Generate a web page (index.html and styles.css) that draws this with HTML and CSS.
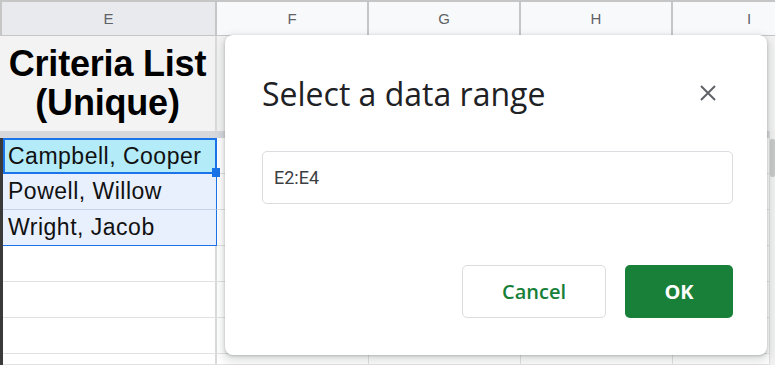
FILE: index.html
```html
<!DOCTYPE html>
<html>
<head>
<meta charset="utf-8">
<link rel="stylesheet" href="styles.css">
</head>
<body>
<div class="sheet">
  <div class="colheads">
    <div class="ch ch-e sel">E</div>
    <div class="ch">F</div>
    <div class="ch">G</div>
    <div class="ch">H</div>
    <div class="ch ch-last">I</div>
  </div>
  <div class="row row-head">
    <div class="cell cell-e head-cell">Criteria List<br>(Unique)</div>
    <div class="cell"></div><div class="cell"></div><div class="cell"></div><div class="cell cell-last"></div>
  </div>
  <div class="freeze"></div>
  <div class="body">
    <div class="row">
      <div class="cell cell-e data active">Campbell, Cooper</div>
      <div class="cell"></div><div class="cell"></div><div class="cell"></div><div class="cell cell-last"></div>
    </div>
    <div class="row">
      <div class="cell cell-e data range">Powell, Willow</div>
      <div class="cell"></div><div class="cell"></div><div class="cell"></div><div class="cell cell-last"></div>
    </div>
    <div class="row">
      <div class="cell cell-e data range last">Wright, Jacob</div>
      <div class="cell"></div><div class="cell"></div><div class="cell"></div><div class="cell cell-last"></div>
    </div>
    <div class="row"><div class="cell cell-e"></div><div class="cell"></div><div class="cell"></div><div class="cell"></div><div class="cell cell-last"></div></div>
    <div class="row"><div class="cell cell-e"></div><div class="cell"></div><div class="cell"></div><div class="cell"></div><div class="cell cell-last"></div></div>
    <div class="row"><div class="cell cell-e"></div><div class="cell"></div><div class="cell"></div><div class="cell"></div><div class="cell cell-last"></div></div>
    <div class="row row-cut"><div class="cell cell-e"></div><div class="cell"></div><div class="cell"></div><div class="cell"></div><div class="cell cell-last"></div></div>
  </div>
  <div class="handle"></div>
  <div class="scrollbar"><div class="thumb"></div></div>
</div>

<div class="dialog">
  <div class="dlg-head">
    <div class="dlg-title">Select a data range</div>
    <svg class="close" width="24" height="24" viewBox="0 0 24 24"><path d="M5 5L19 19M19 5L5 19" stroke="#5f6368" stroke-width="2" fill="none"/></svg>
  </div>
  <div class="range-input">E2:E4</div>
  <div class="actions">
    <div class="btn btn-cancel">Cancel</div>
    <div class="btn btn-ok">OK</div>
  </div>
</div>
</body>
</html>
```
FILE: styles.css
```css
* { box-sizing: border-box; }
html, body { margin: 0; padding: 0; }
body {
  width: 775px;
  height: 365px;
  overflow: hidden;
  background: #fff;
  font-family: Arial, "Liberation Sans", sans-serif;
  position: relative;
}
.sheet { width: 775px; height: 365px; overflow: hidden; position: relative; }
.colheads {
  display: flex;
  height: 36px;
  border-top: 2px solid #c6c6c6;
  border-bottom: 1px solid #c6c6c6;
  background: #f8f9fa;
}
.ch {
  width: 152px;
  flex: none;
  border-right: 2px solid #c6c6c6;
  display: flex;
  align-items: center;
  justify-content: center;
  font-family: "Liberation Sans", Arial, sans-serif;
  font-size: 15px;
  color: #5f6368;
}
.ch-e { width: 217px; border-left: 2px solid #c6c6c6; }
.ch-last { width: 102px; padding-left: 50px; border-right: none; }
.ch.sel { background: #e8eaed; }
.row { display: flex; height: 36px; }
.row-cut { height: 11px; }
.row-head { height: 95px; background: #f3f3f3; }
.cell {
  width: 152px;
  flex: none;
  border-right: 1px solid #e2e2e2;
  border-bottom: 1px solid #e2e2e2;
}
.cell-last { width: 102px; border-right: none; }
.body .cell-last { width: 99px; }
.cell-e { width: 217px; border-right: 2px solid #dadada; }
.row-head .cell { border-bottom: none; }
.head-cell {
  font-weight: bold;
  font-size: 36px;
  line-height: 39px;
  text-align: center;
  color: #000;
  padding-top: 8px;
  letter-spacing: -0.2px;
}
.freeze { height: 7px; background: #d6d8dc; }
.body { border-left: 3px solid #3a3a3a; }
.body .cell-e { width: 214px; }
.data {
  font-size: 23px;
  letter-spacing: 0.5px;
  color: #111;
  padding-left: 5px;
  line-height: 35px;
  background: #e8f0fe;
}
.range { border-right: 1px solid #1a73e8; border-bottom: 1px solid #c7d3e6; }
.range.last { border-bottom: 1px solid #1a73e8; }
.active {
  background: #b3ebf9;
  border: 2px solid #1a73e8;
  line-height: 32px;
  padding-left: 3px;
}
.handle {
  position: absolute;
  left: 212px;
  top: 168px;
  width: 8px;
  height: 9px;
  background: #1a73e8;
}
.scrollbar {
  position: absolute;
  right: 0;
  top: 131px;
  width: 6px;
  height: 234px;
  background: #f1f1f1;
  border-left: 1px solid #e0e0e0;
}
.thumb { margin-top: 8px; height: 38px; background: #c8c8c8; border-radius: 2px; }

.dialog {
  position: absolute;
  left: 225px;
  top: 35px;
  width: 542px;
  height: 320px;
  background: #fff;
  border-radius: 8px;
  box-shadow: 0 4px 8px 3px rgba(60,64,67,.15), 0 1px 3px rgba(60,64,67,.3);
  padding: 35px 34px 37px 37px;
  display: flex;
  flex-direction: column;
}
.dlg-head {
  display: flex;
  align-items: center;
  justify-content: space-between;
  height: 46px;
}
.dlg-title {
  font-family: "Open Sans", Roboto, sans-serif;
  font-size: 32px;
  color: #202124;
  letter-spacing: 0;
}
.close { margin-right: 13px; }
.range-input {
  margin-top: 35px;
  height: 53px;
  border: 1px solid #dadce0;
  border-radius: 5px;
  padding-left: 11px;
  display: flex;
  align-items: center;
  font-family: Roboto, "Open Sans", sans-serif;
  font-size: 18px;
  color: #3c4043;
}
.actions {
  margin-top: auto;
  display: flex;
  justify-content: flex-end;
  gap: 19px;
}
.btn {
  height: 53px;
  border-radius: 5px;
  display: flex;
  align-items: center;
  justify-content: center;
  font-family: "Open Sans", Roboto, sans-serif;
  font-weight: 600;
  font-size: 20px;
}
.btn-cancel { width: 144px; border: 1px solid #dadce0; color: #188038; }
.btn-ok { width: 108px; background: #188038; color: #fff; font-weight: 700; }
```
